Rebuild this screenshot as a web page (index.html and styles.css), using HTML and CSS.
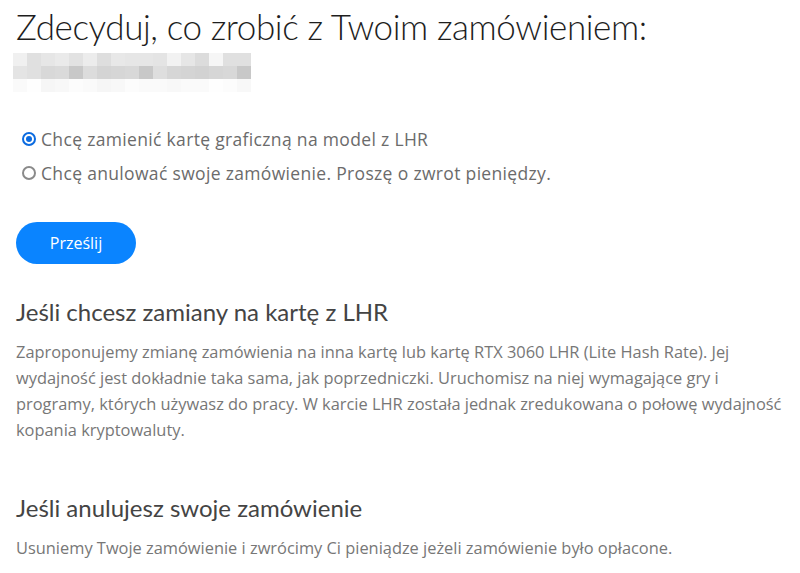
FILE: index.html
```html
<!DOCTYPE html>
<html lang="pl">
<head>
<meta charset="utf-8">
<title>Zdecyduj</title>
<link rel="stylesheet" href="styles.css">
</head>
<body>
<main class="page">
  <h1 class="title">Zdecyduj, co zrobić z Twoim zamówieniem:</h1>
  <div class="mosaic" aria-hidden="true">
    <div class="mrow">
      <span style="background:#f0f0f0"></span><span style="background:#e0e0e0"></span><span style="background:#e6e6e6"></span><span style="background:#eaeaea"></span><span style="background:#e2e2e2"></span><span style="background:#ececec"></span><span style="background:#dedede"></span><span style="background:#e8e8e8"></span><span style="background:#e6e6e6"></span><span style="background:#e6e6e6"></span><span style="background:#e4e4e4"></span><span style="background:#f2f2f2"></span><span style="background:#e6e6e6"></span><span style="background:#dcdcdc"></span><span style="background:#f6f6f6"></span><span style="background:#e0e0e0"></span><span style="background:#e0e0e0"></span>
    </div>
    <div class="mrow">
      <span style="background:#e4e4e4"></span><span style="background:#e0e0e0"></span><span style="background:#d8d8d8"></span><span style="background:#dadada"></span><span style="background:#c8c8c8"></span><span style="background:#dcdcdc"></span><span style="background:#d4d4d4"></span><span style="background:#d6d6d6"></span><span style="background:#d8d8d8"></span><span style="background:#c8c8c8"></span><span style="background:#dedede"></span><span style="background:#d6d6d6"></span><span style="background:#d4d4d4"></span><span style="background:#d2d2d2"></span><span style="background:#d6d6d6"></span><span style="background:#d8d8d8"></span><span style="background:#c8c8c8"></span>
    </div>
    <div class="mrow">
      <span style="background:#fafafa"></span><span style="background:#fefefe"></span><span style="background:#f6f6f6"></span><span style="background:#f8f8f8"></span><span style="background:#fcfcfc"></span><span style="background:#fafafa"></span><span style="background:#f6f6f6"></span><span style="background:#f8f8f8"></span><span style="background:#fcfcfc"></span><span style="background:#fafafa"></span><span style="background:#fafafa"></span><span style="background:#f8f8f8"></span><span style="background:#fafafa"></span><span style="background:#fafafa"></span><span style="background:#fefefe"></span><span style="background:#fcfcfc"></span><span style="background:#f8f8f8"></span>
    </div>
  </div>

  <form class="choices">
    <label class="choice">
      <input type="radio" name="decision" checked>
      <span class="dot"></span>
      <span>Chcę zamienić kartę graficzną na model z LHR</span>
    </label>
    <label class="choice">
      <input type="radio" name="decision">
      <span class="dot"></span>
      <span>Chcę anulować swoje zamówienie. Proszę o zwrot pieniędzy.</span>
    </label>
    <button type="button" class="submit">Prześlij</button>
  </form>

  <section class="info">
    <h2 class="info-title">Jeśli chcesz zamiany na kartę z LHR</h2>
    <p class="info-text">Zaproponujemy zmianę zamówienia na inna kartę lub kartę RTX 3060 LHR (Lite Hash Rate). Jej wydajność jest dokładnie taka sama, jak poprzedniczki. Uruchomisz na niej wymagające gry i programy, których używasz do pracy. W karcie LHR została jednak zredukowana o połowę wydajność kopania kryptowaluty.</p>
  </section>

  <section class="info info-second">
    <h2 class="info-title">Jeśli anulujesz swoje zamówienie</h2>
    <p class="info-text">Usuniemy Twoje zamówienie i zwrócimy Ci pieniądze jeżeli zamówienie było opłacone.</p>
  </section>
</main>
</body>
</html>
```

FILE: styles.css
```css
* { box-sizing: border-box; }
html, body { margin: 0; padding: 0; background: #fff; }
body { font-family: "Lato", "Noto Sans", sans-serif; color: #222; }

.page {
  padding: 6px 0 0 16px;
}

.title {
  margin: 0;
  font-weight: 300;
  font-size: 35px;
  line-height: 40px;
  color: #1e1e1e;
  letter-spacing: -0.4px;
}

.mosaic {
  margin: 7px 0 0 -3px;
  display: flex;
  flex-direction: column;
}
.mrow { display: flex; }
.mrow span { width: 14px; height: 13px; display: block; }

.choices {
  margin-top: 30px;
  display: flex;
  flex-direction: column;
  align-items: flex-start;
}

.choice {
  display: flex;
  align-items: center;
  gap: 5px;
  font-family: "Open Sans", "Noto Sans", sans-serif;
  font-size: 17.5px;
  letter-spacing: 0.33px;
  color: #6b6b6b;
  height: 34px;
  padding-left: 6px;
  cursor: pointer;
}
.choice input { display: none; }
.dot {
  width: 14px;
  height: 14px;
  border-radius: 50%;
  border: 2px solid #8a8a8a;
  display: inline-block;
  position: relative;
  flex: none;
}
.choice input:checked + .dot { border-color: #0b6be0; }
.choice input:checked + .dot::after {
  content: "";
  position: absolute;
  left: 2px; top: 2px;
  width: 6px; height: 6px;
  border-radius: 50%;
  background: #0b6be0;
}

.submit {
  margin-top: 32px;
  width: 120px;
  height: 42px;
  border: 0;
  border-radius: 21px;
  background: #0a84ff;
  color: #fff;
  font-family: "Open Sans", sans-serif;
  font-size: 16px;
}

.info { margin-top: 33px; }
.info-second { margin-top: 50px; }

.info-title {
  margin: 0;
  font-weight: 400;
  font-size: 24px;
  line-height: 30px;
  color: #444;
}
.info-text {
  margin: 12px 0 0;
  font-family: "Open Sans", "Noto Sans", sans-serif;
  font-size: 16.4px;
  line-height: 26px;
  color: #777;
}
```
